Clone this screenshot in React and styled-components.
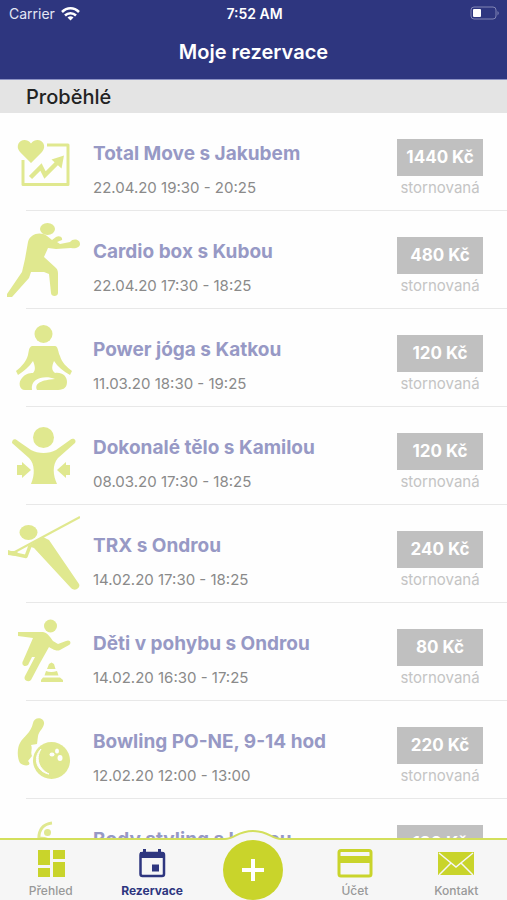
import React from 'react';
import styled, { createGlobalStyle } from 'styled-components';

const GlobalStyle = createGlobalStyle`
  * {
    box-sizing: border-box;
  }

  body {
    margin: 0;
    background: #fefefe;
    font-family: Inter, 'Liberation Sans', sans-serif;
  }
`;

// activity icons, all drawn on an 80x80 canvas
const MoveIcon = () => (
  <Picture viewBox="0 0 80 80" aria-hidden="true">
    <path d="M47 22H68V61.500H23V37" fill="none" stroke="currentColor" strokeWidth="3" strokeLinejoin="round" />
    <path d="M31 40 20 29C13 21 24 12 31 20.500C38 12 49 21 42 29Z" fill="currentColor" />
    <path d="M30.500 54.500 41 44 45 52 57 40" fill="none" stroke="currentColor" strokeWidth="4.500" />
    <path d="M64 32.500 61.500 45.500 51.500 36.500Z" fill="currentColor" />
  </Picture>
);

const BoxIcon = () => (
  <Picture viewBox="0 0 80 80" aria-hidden="true" fill="currentColor">
    <ellipse cx="47.500" cy="8" rx="7.500" ry="6" />
    <path d="M28 21C30 13 40 10 47 15L52 19 56 16C59 14 63 16 62 19L57 21 60 23 70 21C73 17 80 18 80 23C80 26 76 28 71 27L56 28 48 27 44 36 56 47C58 49 58 51 58 54V72C58 76 51 76 51 72L49 53 44 51H31L29 57 12 76H7V73L22 51 25 38Z" />
  </Picture>
);

const YogaIcon = () => (
  <Picture viewBox="0 0 80 80" aria-hidden="true" fill="currentColor">
    <circle cx="43.500" cy="15" r="9" />
    <path d="M32 27H55C58 27 58 33 60 37C62 44 67 48 72 52L70 56C63 52 58 48 54 42C52 47 51 51 55 54C62 53 67 57 67 63C67 70 62 71 56 71H37C34 64 42 61 55 60C45 56 30 59 32 71H25C19 71 18 63 22 59C25 55 29 54 33 54C36 51 35 47 33 42C29 48 24 52 18 56L16 52C22 47 26 43 28 36C29 31 29 28 32 27Z" />
  </Picture>
);

const BodyIcon = () => (
  <Picture viewBox="0 0 80 80" aria-hidden="true" fill="currentColor">
    <circle cx="43.500" cy="20.500" r="10.500" />
    <path d="M12 26C12 22 15 21 18 24L31 33C38 37 49 37 56 33L70 23C73 20 77 23 75 26L58 41C52 48 53 58 57 67H31C35 58 35 47 29 41Z" />
    <path d="M17 48H22V45L31 53 22 61V58H17ZM70 48H66V45L57 53 66 61V58H70Z" />
  </Picture>
);

const TrxIcon = () => (
  <Picture viewBox="0 0 80 80" aria-hidden="true">
    <ellipse cx="28.500" cy="17.500" rx="9" ry="7.500" fill="currentColor" />
    <path d="M12 38.500 80 2" fill="none" stroke="currentColor" strokeWidth="2" />
    <path d="M10 38 26 41.500 30 31" fill="none" stroke="currentColor" strokeWidth="3.500" strokeLinejoin="round" />
    <path d="M8 35 11 36 16 36 18 38 16 41 8 40ZM28 31 43 22 49 25 79 69C81 73 75 77 71 73L34 33Z" fill="currentColor" />
  </Picture>
);

const KidsIcon = () => (
  <Picture viewBox="0 0 80 80" aria-hidden="true" fill="currentColor">
    <circle cx="50.500" cy="13" r="6.500" />
    <path d="M18 19 43 19C48 20 50 24 53 28L58 31 66 28C70 26 72 30 69 32L60 37C56 39 51 35 49 34L40 50 31 67C28 70 23 67 25 63L35 44 32 44 28 52C24 55 21 51 23 48L33 25 18 23Z" />
    <path d="M51.500 49.500 54 51 55.500 56H47L49 51ZM46 58Q51 60 57 58L58.500 62.500H44.500ZM43 64.500H60L63 67V69H41V67Z" />
  </Picture>
);

const BowlingIcon = () => (
  <Picture viewBox="0 0 80 80" aria-hidden="true">
    <path d="M33 12C34 5 45 6 44 13C43 18 39 20 38 25L37 33 31 34C33 38 30 41 32 45L28 50C33 55 24 56 20 52C17 47 17 37 20 32C23 26 31 22 33 12Z" fill="currentColor" />
    <circle cx="51.500" cy="49.500" r="18.500" fill="currentColor" />
    <path d="M41 38C32 47 37 61 49 63C39 58 35 48 41 38Z" fill="#fefefe" stroke="#fefefe" />
    <g fill="#fefefe">
      <ellipse cx="57" cy="40" rx="2" ry="2.500" />
      <ellipse cx="52" cy="43.500" rx="2.500" ry="2" />
      <ellipse cx="60" cy="47" rx="2.500" ry="3" />
    </g>
  </Picture>
);

const StylingIcon = () => (
  <Picture viewBox="0 0 80 80" aria-hidden="true">
    <path d="M52 14C43 15 38 21 39 32V60" fill="none" stroke="currentColor" strokeWidth="3" />
    <circle cx="47.500" cy="23.500" r="3.500" fill="currentColor" />
    <path d="M39 28C44 27 52 29 54 35L51 70H39Z" fill="currentColor" />
  </Picture>
);

const reservations = [
  { name: 'Total Move s Jakubem', time: '22.04.20 19:30 - 20:25', price: '1440 Kč', Icon: MoveIcon },
  { name: 'Cardio box s Kubou', time: '22.04.20 17:30 - 18:25', price: '480 Kč', Icon: BoxIcon },
  { name: 'Power jóga s Katkou', time: '11.03.20 18:30 - 19:25', price: '120 Kč', Icon: YogaIcon },
  { name: 'Dokonalé tělo s Kamilou', time: '08.03.20 17:30 - 18:25', price: '120 Kč', Icon: BodyIcon },
  { name: 'TRX s Ondrou', time: '14.02.20 17:30 - 18:25', price: '240 Kč', Icon: TrxIcon },
  { name: 'Děti v pohybu s Ondrou', time: '14.02.20 16:30 - 17:25', price: '80 Kč', Icon: KidsIcon },
  { name: 'Bowling PO-NE, 9-14 hod', time: '12.02.20 12:00 - 13:00', price: '220 Kč', Icon: BowlingIcon },
  { name: 'Body styling s Ivanou', time: '11.02.20 17:30 - 18:25', price: '120 Kč', Icon: StylingIcon },
];

const App = () => {
  return (
    <Screen>
      <GlobalStyle />
      <Header>
        <StatusBar>
          <Carrier>
            Carrier
            <svg width="19" height="14" viewBox="0 0 19 14" fill="none" stroke="#fff" strokeWidth="2.500" aria-hidden="true">
              <path d="M1 5C6 0 13 0 18 5" />
              <path d="M4 8.500C7 5.500 12 5.500 15 8.500" />
              <path d="M9.500 13.500 6.500 10.500Q9.500 8 12.500 10.500Z" fill="#fff" stroke="none" />
            </svg>
          </Carrier>
          <Clock>7:52 AM</Clock>
          <Battery width="30" height="15" viewBox="0 0 30 15" aria-hidden="true">
            <rect x="1" y="1" width="25" height="12" rx="3" fill="none" stroke="#8185b5" />
            <rect x="3" y="3" width="8" height="8" rx="1" fill="#fff" />
            <path d="M27.500 5V9.500Q30 7 27.500 5Z" fill="#8185b5" />
          </Battery>
        </StatusBar>
        <Title>Moje rezervace</Title>
      </Header>
      <Main>
        <SectionTitle>Proběhlé</SectionTitle>
        <List>
          {reservations.map(({ name, time, price, Icon }) => (
            <Row key={name}>
              <Icon />
              <Info>
                <Name>{name}</Name>
                <Time>{time}</Time>
              </Info>
              <Payment>
                <Price>{price}</Price>
                <Status>stornovaná</Status>
              </Payment>
            </Row>
          ))}
        </List>
      </Main>
      <TabBar>
        <Tab href="#prehled">
          <TabIcon viewBox="0 0 36 30" fill="currentColor" aria-hidden="true">
            <path d="M5 1H17V16H5ZM20 1H32V10H20ZM20 13H32V28H20ZM5 19H17V28H5Z" />
          </TabIcon>
          Přehled
        </Tab>
        <Tab href="#rezervace" $active aria-current="page">
          <TabIcon viewBox="0 0 36 30" aria-hidden="true">
            <rect x="6.500" y="4" width="23.500" height="23" rx="2" fill="none" stroke="currentColor" strokeWidth="2.500" />
            <path d="M6 3H30V9H6ZM9 0H12V5H9ZM24 0H27V5H24ZM18 15.500H25V22.500H18Z" fill="currentColor" />
          </TabIcon>
          Rezervace
        </Tab>
        <AddSlot>
          <Bump width="76" height="20" viewBox="0 0 76 20" aria-hidden="true">
            <path d="M2 9H10C20 9 22 1 38 1C54 1 56 9 66 9H74V20H2Z" fill="#f6f6f6" />
            <path d="M0 9H10C20 9 22 1 38 1C54 1 56 9 66 9H76" fill="none" stroke="#d3df5c" strokeWidth="2" />
          </Bump>
          <AddButton aria-label="Přidat rezervaci">
            <svg width="24" height="24" viewBox="0 0 24 24" stroke="#fff" strokeWidth="4" aria-hidden="true">
              <path d="M12 1V23M1 12H23" />
            </svg>
          </AddButton>
        </AddSlot>
        <Tab href="#ucet">
          <TabIcon viewBox="0 0 36 30" aria-hidden="true">
            <rect x="2" y="1.500" width="32" height="25.500" rx="2" fill="none" stroke="currentColor" strokeWidth="3" />
            <path d="M2 7H34V14H2Z" fill="currentColor" />
          </TabIcon>
          Účet
        </Tab>
        <Tab href="#kontakt">
          <TabIcon viewBox="0 0 36 30" aria-hidden="true">
            <rect y="3" width="36" height="23" fill="currentColor" />
            <path d="M1 4 18 18 35 4M1 26 13 14M35 26 23 14" fill="none" stroke="#f6f6f6" strokeWidth="1.500" />
          </TabIcon>
          Kontakt
        </Tab>
      </TabBar>
    </Screen>
  )
}

// full height column: header, list, tab bar
const Screen = styled.div`
  display: flex;
  flex-direction: column;
  height: 100vh;
  overflow: hidden;
`;

const Header = styled.header`
  flex: none;
  color: #fff;
  background: #2e367f;
  border-bottom: 1px solid #8c92c4;
`;

const StatusBar = styled.div`
  display: grid;
  grid-template-columns: 1fr auto 1fr;
  align-items: center;
  height: 27px;
  padding: 0 7px 0 9px;
  font-size: 14px;
`;

const Carrier = styled.span`
  display: flex;
  align-items: center;
  gap: 6px;
  color: #e4e6f4;
`;

const Clock = styled.span`
  font-weight: 600;
`;

const Battery = styled.svg`
  justify-self: end;
`;

const Title = styled.h1`
  margin: 0;
  padding-bottom: 2px;
  font-size: 20px;
  font-weight: 600;
  line-height: 50px;
  text-align: center;
`;

const Main = styled.main`
  flex: 1;
  min-height: 0;
  overflow: hidden;
`;

const SectionTitle = styled.h2`
  margin: 0;
  padding: 2px 0 0 26px;
  background: #e4e4e4;
  color: #222;
  font-size: 20px;
  font-weight: 500;
  line-height: 31px;
`;

const List = styled.ul`
  margin: 0;
  padding: 0;
  list-style: none;
`;

const Row = styled.li`
  display: flex;
  align-items: flex-start;
  height: 98px;
  padding-right: 24px;
  /* divider starts at the text inset of the section title */
  background: linear-gradient(#e8e8e8, #e8e8e8) 26px 100% / 100% 1px no-repeat;
`;

const Picture = styled.svg`
  flex: none;
  width: 80px;
  height: 80px;
  margin-top: 10px;
  margin-right: 13px;
  color: #e0e88f;
`;

const Info = styled.div`
  flex: 1;
  min-width: 0;
  padding-top: 28px;
`;

const Name = styled.h3`
  margin: 0;
  color: #9799c5;
  font-size: 19px;
  font-weight: 700;
  line-height: 26px;
`;

const Time = styled.p`
  margin: 11px 0 0;
  color: #8a8a8a;
  font-size: 15px;
  line-height: 20px;
`;

const Payment = styled.div`
  width: 86px;
  padding-top: 26px;
  text-align: center;
`;

const Price = styled.div`
  background: #c0c0c0;
  color: #fff;
  font-size: 17px;
  font-weight: 700;
  line-height: 37px;
`;

const Status = styled.div`
  margin-top: 2px;
  color: #c4c4c4;
  font-size: 15px;
  line-height: 20px;
`;

const TabBar = styled.nav`
  position: relative;
  flex: none;
  display: grid;
  grid-template-columns: repeat(5, 1fr);
  height: 62px;
  border-top: 2px solid #d3df5c;
  background: #f6f6f6;
`;

const Tab = styled.a`
  display: flex;
  flex-direction: column;
  align-items: center;
  gap: 4px;
  padding-top: 9px;
  color: ${({ $active }) => ($active ? '#2e367f' : '#999')};
  font-size: 12px;
  font-weight: ${({ $active }) => ($active ? 700 : 500)};
  line-height: 16px;
  text-decoration: none;

  svg {
    color: ${({ $active }) => ($active ? '#2e367f' : '#c9d42b')};
  }
`;

const TabIcon = styled.svg`
  width: 36px;
  height: 30px;
`;

const AddSlot = styled.div`
  display: flex;
  justify-content: center;
`;

// bar edge bulging over the round button
const Bump = styled.svg`
  position: absolute;
  top: -10px;
`;

const AddButton = styled.button`
  position: relative;
  display: grid;
  place-items: center;
  width: 60px;
  height: 60px;
  padding: 0;
  border: none;
  border-radius: 50%;
  background: #c9d42b;
`;

export default App;
